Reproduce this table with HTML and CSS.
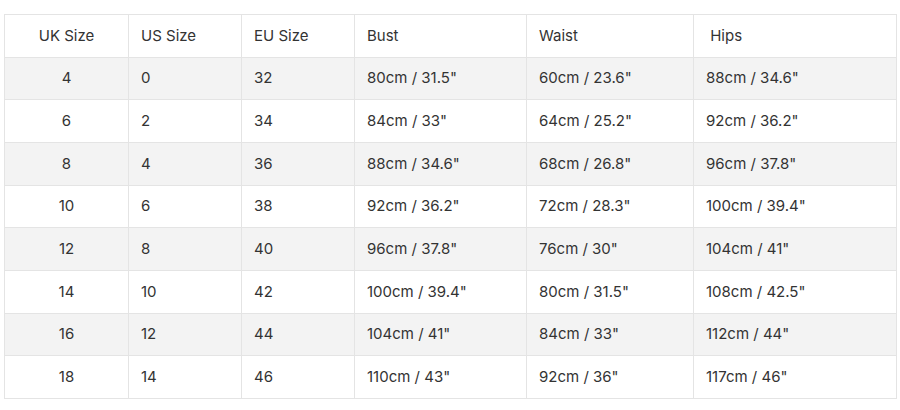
FILE: index.html
```html
<!DOCTYPE html>
<html lang="en">
<head>
<meta charset="utf-8">
<title>Size Guide</title>
<link rel="stylesheet" href="styles.css">
</head>
<body>
<table class="size-table">
  <colgroup>
    <col class="c1"><col class="c2"><col class="c3"><col class="c4"><col class="c5"><col class="c6">
  </colgroup>
  <thead>
    <tr><th class="center">UK Size</th><th>US Size</th><th>EU Size</th><th>Bust</th><th>Waist</th><th>&nbsp;Hips</th></tr>
  </thead>
  <tbody>
    <tr><td class="center">4</td><td>0</td><td>32</td><td>80cm / 31.5"</td><td>60cm / 23.6"</td><td>88cm / 34.6"</td></tr>
    <tr><td class="center">6</td><td>2</td><td>34</td><td>84cm / 33"</td><td>64cm / 25.2"</td><td>92cm / 36.2"</td></tr>
    <tr><td class="center">8</td><td>4</td><td>36</td><td>88cm / 34.6"</td><td>68cm / 26.8"</td><td>96cm / 37.8"</td></tr>
    <tr><td class="center">10</td><td>6</td><td>38</td><td>92cm / 36.2"</td><td>72cm / 28.3"</td><td>100cm / 39.4"</td></tr>
    <tr><td class="center">12</td><td>8</td><td>40</td><td>96cm / 37.8"</td><td>76cm / 30"</td><td>104cm / 41"</td></tr>
    <tr><td class="center">14</td><td>10</td><td>42</td><td>100cm / 39.4"</td><td>80cm / 31.5"</td><td>108cm / 42.5"</td></tr>
    <tr><td class="center">16</td><td>12</td><td>44</td><td>104cm / 41"</td><td>84cm / 33"</td><td>112cm / 44"</td></tr>
    <tr><td class="center">18</td><td>14</td><td>46</td><td>110cm / 43"</td><td>92cm / 36"</td><td>117cm / 46"</td></tr>
  </tbody>
</table>
</body>
</html>
```
FILE: styles.css
```css
html, body {
  margin: 0;
  background: #ffffff;
}
body {
  padding: 14px 4px 0 4px;
  font-family: Inter, "Noto Sans", "Liberation Sans", sans-serif;
  font-size: 15px;
  color: #333333;
}
.size-table {
  width: 892px;
  border-collapse: collapse;
  table-layout: fixed;
}
.c1 { width: 124px; }
.c2 { width: 113px; }
.c3 { width: 113px; }
.c4 { width: 172px; }
.c5 { width: 167px; }
.c6 { width: 203px; }
.size-table tr {
  height: 42.67px;
}
.size-table th,
.size-table td {
  border: 1px solid #e4e4e4;
  padding: 0 12px;
  text-align: left;
  font-weight: 400;
  vertical-align: middle;
  line-height: 18px;
}
.size-table .center {
  text-align: center;
}
.size-table tbody tr:nth-child(odd) {
  background: #f3f3f3;
}
```
